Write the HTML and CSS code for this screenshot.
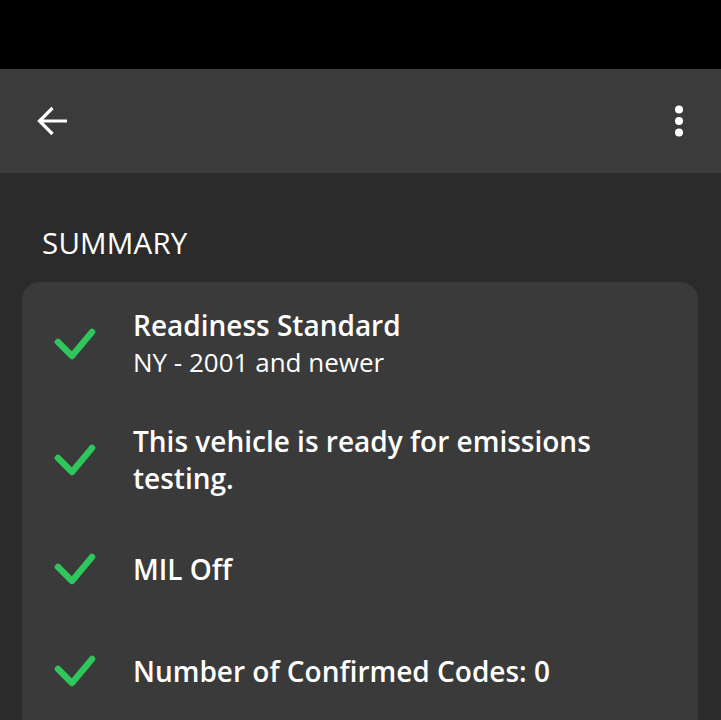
FILE: index.html
```html
<!DOCTYPE html>
<html>
<head>
<meta charset="utf-8">
<link rel="stylesheet" href="styles.css">
</head>
<body>
<div class="statusbar"></div>
<header class="toolbar">
  <svg class="back" width="32" height="32" viewBox="0 0 32 32"><path d="M31 16H3.5M16.5 3L3.5 16l13 13" fill="none" stroke="#fff" stroke-width="3.2" stroke-linecap="butt" stroke-linejoin="miter"/></svg>
  <svg class="more" width="10" height="32" viewBox="0 0 10 32"><circle cx="5" cy="4.5" r="4" fill="#fff"/><circle cx="5" cy="16" r="4" fill="#fff"/><circle cx="5" cy="27.5" r="4" fill="#fff"/></svg>
</header>
<main class="content">
  <h2 class="section-title">SUMMARY</h2>
  <section class="card">
    <div class="row">
      <svg class="check" viewBox="0 0 44 36"><path d="M5 16L19 30L39 6" fill="none" stroke="#2fc65c" stroke-width="6.5" stroke-linecap="round" stroke-linejoin="round"/></svg>
      <div class="text">
        <div class="title">Readiness Standard</div>
        <div class="sub">NY - 2001 and newer</div>
      </div>
    </div>
    <div class="row">
      <svg class="check" viewBox="0 0 44 36"><path d="M5 16L19 30L39 6" fill="none" stroke="#2fc65c" stroke-width="6.5" stroke-linecap="round" stroke-linejoin="round"/></svg>
      <div class="text">
        <div class="title">This vehicle is ready for emissions testing.</div>
      </div>
    </div>
    <div class="row">
      <svg class="check" viewBox="0 0 44 36"><path d="M5 16L19 30L39 6" fill="none" stroke="#2fc65c" stroke-width="6.5" stroke-linecap="round" stroke-linejoin="round"/></svg>
      <div class="text">
        <div class="title">MIL Off</div>
      </div>
    </div>
    <div class="row">
      <svg class="check" viewBox="0 0 44 36"><path d="M5 16L19 30L39 6" fill="none" stroke="#2fc65c" stroke-width="6.5" stroke-linecap="round" stroke-linejoin="round"/></svg>
      <div class="text">
        <div class="title">Number of Confirmed Codes: 0</div>
      </div>
    </div>
  </section>
</main>
</body>
</html>
```
FILE: styles.css
```css
html, body {
  margin: 0;
  padding: 0;
  background: #2b2b2b;
  font-family: "Open Sans", "Noto Sans", sans-serif;
  color: #fff;
  overflow: hidden;
}
.statusbar {
  height: 69px;
  background: #000;
}
.toolbar {
  height: 104px;
  background: #3b3b3b;
  display: flex;
  align-items: center;
  justify-content: space-between;
  padding: 0 37px 0 36px;
  box-sizing: border-box;
}
.back { width: 32px; height: 32px; }
.more { width: 10px; height: 32px; }
.content {
  padding: 52px 23px 0 22px;
}
.section-title {
  margin: 0 0 21px 20px;
  font-size: 29.5px;
  font-weight: 400;
  line-height: 36px;
  letter-spacing: 0.2px;
}
.card {
  background: #3a3a3a;
  border-radius: 18px;
  padding: 25px 20px 40px 31px;
  display: flex;
  flex-direction: column;
  gap: 42px;
}
.row {
  display: flex;
  align-items: center;
  min-height: 60px;
  gap: 36px;
}
.check {
  width: 44px;
  height: 36px;
  flex: none;
}
.text {
  font-size: 28px;
  line-height: 37px;
}
.title { font-weight: 600; }
.sub { font-weight: 400; font-size: 26px; }
```
